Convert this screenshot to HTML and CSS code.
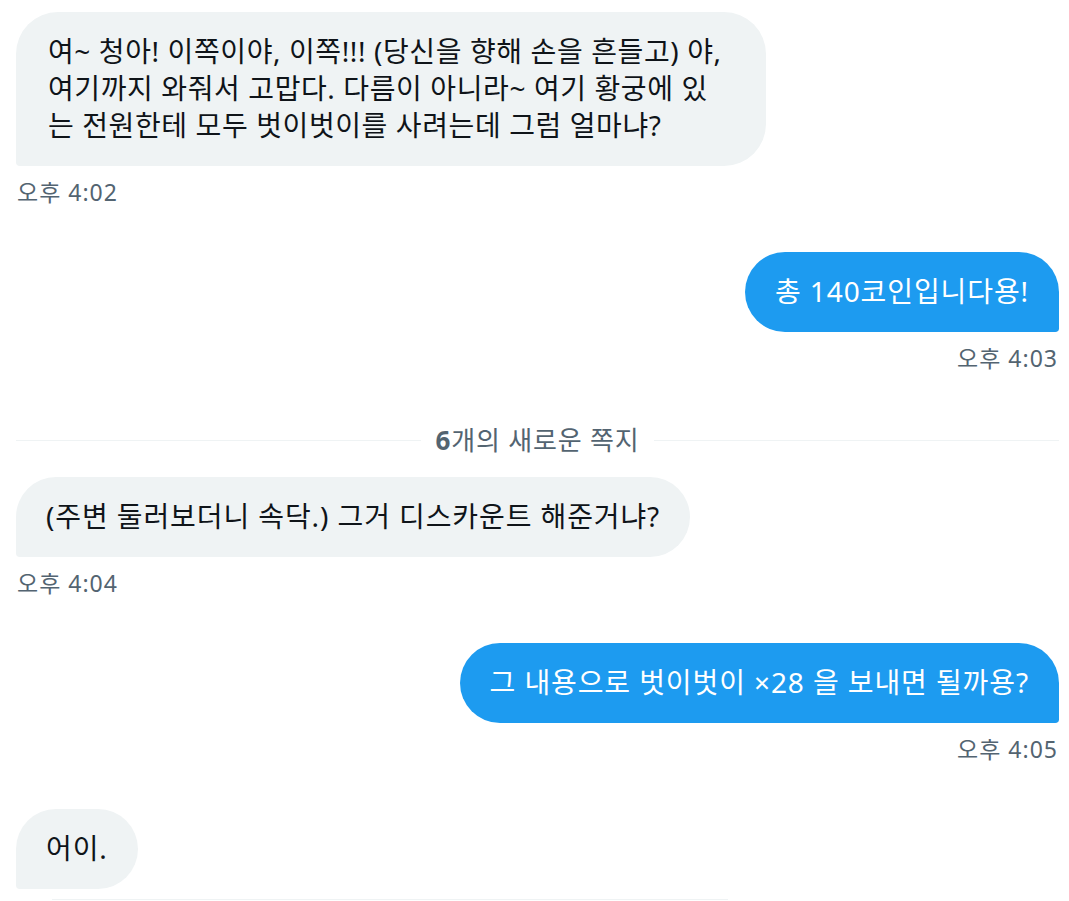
FILE: index.html
```html
<!DOCTYPE html>
<html lang="ko">
<head>
<meta charset="utf-8">
<link rel="stylesheet" href="styles.css">
</head>
<body>
<div class="chat">
  <div class="msg msg-in">
    <div class="bubble bubble-wide">여~ 청아! 이쪽이야, 이쪽!!! (당신을 향해 손을 흔들고) 야,<br>여기까지 와줘서 고맙다. 다름이 아니라~ 여기 황궁에 있<br>는 전원한테 모두 벗이벗이를 사려는데 그럼 얼마냐?</div>
    <div class="time">오후 4:02</div>
  </div>
  <div class="msg msg-out">
    <div class="bubble">총 140코인입니다용!</div>
    <div class="time">오후 4:03</div>
  </div>
  <div class="divider"><span class="divider-text"><b>6</b>개의 새로운 쪽지</span></div>
  <div class="msg msg-in">
    <div class="bubble">(주변 둘러보더니 속닥.) 그거 디스카운트 해준거냐?</div>
    <div class="time">오후 4:04</div>
  </div>
  <div class="msg msg-out">
    <div class="bubble">그 내용으로 벗이벗이 ×28 을 보내면 될까용?</div>
    <div class="time">오후 4:05</div>
  </div>
  <div class="msg msg-in">
    <div class="bubble">어이.</div>
  </div>
  <div class="bottom-line"></div>
</div>
</body>
</html>
```

FILE: styles.css
```css
html, body {
  margin: 0;
  padding: 0;
  background: #ffffff;
}

body {
  font-family: "Noto Sans", "Noto Sans CJK KR", sans-serif;
  color: #0f1419;
}

.chat {
  width: 1069px;
  height: 901px;
  overflow: hidden;
  box-sizing: border-box;
  padding: 12px 10px 0 16px;
  display: flex;
  flex-direction: column;
}

.msg {
  display: flex;
  flex-direction: column;
  margin-bottom: 46px;
}

.msg-in {
  align-items: flex-start;
}

.msg-out {
  align-items: flex-end;
}

.bubble {
  box-sizing: border-box;
  max-width: 750px;
  padding: 21px 30px 22px;
  font-size: 28px;
  line-height: 37px;
  letter-spacing: 0.9px;
  border-radius: 42px;
  white-space: nowrap;
}

.bubble-wide {
  width: 750px;
  padding-left: 32px;
  letter-spacing: 0.6px;
}

.msg-in .bubble {
  background: #eff3f4;
  color: #0f1419;
  border-bottom-left-radius: 4px;
}

.msg-out .bubble {
  background: #1d9bf0;
  color: #ffffff;
  border-bottom-right-radius: 4px;
}

.time {
  margin-top: 12px;
  font-size: 23px;
  line-height: 28px;
  letter-spacing: 1px;
  color: #536471;
}

.msg-in .time {
  padding-left: 1px;
}

.msg-out .time {
  padding-right: 1px;
}

.divider {
  display: flex;
  align-items: center;
  gap: 15px;
  height: 28px;
  margin-top: 8px;
  margin-bottom: 23px;
}

.divider::before,
.divider::after {
  content: "";
  flex: 1;
  height: 1px;
  background: #eff3f4;
}

.divider-text {
  font-size: 26px;
  line-height: 28px;
  letter-spacing: 0.8px;
  color: #536471;
}

.divider-text b {
  font-weight: 700;
}

.bottom-line {
  margin-top: -36px;
  margin-left: 36px;
  width: 676px;
  height: 1px;
  background: #eff3f4;
}
```
